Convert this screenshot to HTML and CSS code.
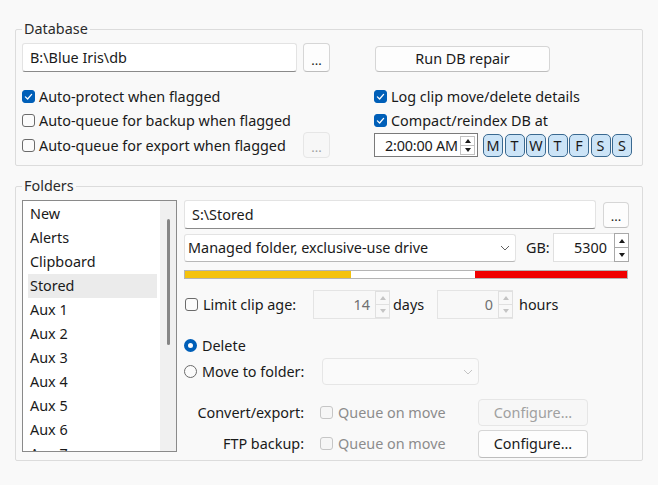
FILE: index.html
```html
<!DOCTYPE html>
<html>
<head>
<meta charset="utf-8">
<title>Clip storage</title>
<link rel="stylesheet" href="styles.css">
</head>
<body>
<div class="page">
  <fieldset class="group db">
    <legend>Database</legend>
    <div class="db-cols">
      <div class="db-left">
        <div class="path-row">
          <div class="field path">B:\Blue Iris\db</div>
          <button class="btn dots">...</button>
        </div>
        <div class="chk-row first"><span class="chk on"><svg viewBox="0 0 13 13" width="13" height="13"><path d="M3.4 6.9l2.2 2.1 4-4.6" fill="none" stroke="#fff" stroke-width="1.3" stroke-linecap="round" stroke-linejoin="round"/></svg></span><span>Auto-protect when flagged</span></div>
        <div class="chk-row"><span class="chk"></span><span>Auto-queue for backup when flagged</span></div>
        <div class="chk-row tall"><span class="chk"></span><span class="grow">Auto-queue for export when flagged</span><button class="btn dots off">...</button></div>
      </div>
      <div class="db-right">
        <button class="btn repair">Run DB repair</button>
        <div class="chk-row first"><span class="chk on"><svg viewBox="0 0 13 13" width="13" height="13"><path d="M3.4 6.9l2.2 2.1 4-4.6" fill="none" stroke="#fff" stroke-width="1.3" stroke-linecap="round" stroke-linejoin="round"/></svg></span><span>Log clip move/delete details</span></div>
        <div class="chk-row"><span class="chk on"><svg viewBox="0 0 13 13" width="13" height="13"><path d="M3.4 6.9l2.2 2.1 4-4.6" fill="none" stroke="#fff" stroke-width="1.3" stroke-linecap="round" stroke-linejoin="round"/></svg></span><span>Compact/reindex DB at</span></div>
        <div class="time-row">
          <div class="timefield">
            <span class="tval">2:00:00 AM</span>
            <span class="spin small"><span class="sb"><i class="tri up"></i></span><span class="sb"><i class="tri down"></i></span></span>
          </div>
          <div class="days">
            <span class="day">M</span><span class="day">T</span><span class="day">W</span><span class="day">T</span><span class="day">F</span><span class="day">S</span><span class="day">S</span>
          </div>
        </div>
      </div>
    </div>
  </fieldset>

  <fieldset class="group folders">
    <legend>Folders</legend>
    <div class="f-cols">
      <div class="listbox">
        <div class="items">
          <div class="item">New</div>
          <div class="item">Alerts</div>
          <div class="item">Clipboard</div>
          <div class="item sel">Stored</div>
          <div class="item">Aux 1</div>
          <div class="item">Aux 2</div>
          <div class="item">Aux 3</div>
          <div class="item">Aux 4</div>
          <div class="item">Aux 5</div>
          <div class="item">Aux 6</div>
          <div class="item">Aux 7</div>
        </div>
        <div class="vscroll"><div class="thumb"></div></div>
      </div>
      <div class="f-right">
        <div class="row r-path">
          <div class="field fpath">S:\Stored</div>
          <button class="btn dots">...</button>
        </div>
        <div class="row r-combo">
          <div class="combo">
            <span>Managed folder, exclusive-use drive</span>
            <svg class="chev" width="10" height="6" viewBox="0 0 10 6"><path d="M1 1l4 4 4-4" fill="none" stroke="#606060" stroke-width="1"/></svg>
          </div>
          <span class="gb">GB:</span>
          <div class="spinfield gbfield">
            <span class="sval">5300</span>
            <span class="spin full"><span class="sb"><i class="tri up"></i></span><span class="sb"><i class="tri down"></i></span></span>
          </div>
        </div>
        <div class="bar">
          <span class="seg yellow" style="width:166px"></span>
          <span class="seg white" style="width:124px"></span>
          <span class="seg red" style="width:152px"></span>
        </div>
        <div class="row r-limit">
          <div class="limit-lbl"><span class="chk"></span><span>Limit clip age:</span></div>
          <div class="spinfield dis daysf">
            <span class="sval">14</span>
            <span class="spin dis-spin"><span class="sb"><i class="tri up"></i></span><span class="sb"><i class="tri down"></i></span></span>
          </div>
          <span class="unit days-u">days</span>
          <div class="spinfield dis hoursf">
            <span class="sval">0</span>
            <span class="spin dis-spin"><span class="sb"><i class="tri up"></i></span><span class="sb"><i class="tri down"></i></span></span>
          </div>
          <span class="unit">hours</span>
        </div>
        <div class="row r-delete">
          <span class="radio on"></span><span>Delete</span>
        </div>
        <div class="row r-move">
          <div class="move-lbl"><span class="radio"></span><span>Move to folder:</span></div>
          <div class="combo dis-combo">
            <span></span>
            <svg class="chev" width="10" height="6" viewBox="0 0 10 6"><path d="M1 1l4 4 4-4" fill="none" stroke="#c4c4c4" stroke-width="1"/></svg>
          </div>
        </div>
        <div class="row r-opt first-opt">
          <span class="olabel">Convert/export:</span>
          <div class="qmove"><span class="chk dis"></span><span>Queue on move</span></div>
          <button class="btn cfg off">Configure...</button>
        </div>
        <div class="row r-opt second-opt">
          <span class="olabel">FTP backup:</span>
          <div class="qmove"><span class="chk dis"></span><span>Queue on move</span></div>
          <button class="btn cfg">Configure...</button>
        </div>
      </div>
    </div>
  </fieldset>
</div>
</body>
</html>
```

FILE: styles.css
```css
* { box-sizing: border-box; }
html, body { margin: 0; padding: 0; }
body {
  background: #f9f9f9;
  font-family: "Noto Sans", "Open Sans", sans-serif;
  font-size: 14.4px;
  color: #1a1a1a;
  width: 658px;
  height: 485px;
  overflow: hidden;
}
.page { padding: 20px 15px 0 15px; }

.group {
  margin: 0;
  border: 1px solid #dcdcdc;
  border-radius: 2px;
  min-width: 0;
}
.group legend {
  padding: 0 2px;
  margin-left: 0;
  line-height: 18px;
  height: 18px;
  color: #2b2b2b;
}
.db { padding: 5px 10px 7px 6px; }
.folders { margin-top: 11px; padding: 5px 13px 3px 6px; }

/* generic controls */
.btn {
  font-family: inherit;
  font-size: 14.4px;
  color: #1a1a1a;
  background: #fdfdfd;
  border: 1px solid #d6d6d6;
  border-bottom-color: #bdbdbd;
  border-radius: 4px;
  padding: 0;
  margin: 0;
}
.btn.off {
  background: #f7f7f7;
  border-color: #e6e6e6;
  color: #a0a0a0;
}
.dots {
  width: 27px;
  height: 29px;
  font-size: 13px;
  line-height: 1;
  padding-top: 6px;
}
.field {
  background: #fff;
  border: 1px solid #e3e3e3;
  border-bottom-color: #8a8a8a;
  border-radius: 3px;
  height: 29px;
  line-height: 27px;
  padding-left: 7px;
  white-space: nowrap;
}

.chk {
  display: inline-block;
  flex: 0 0 13px;
  width: 13px;
  height: 13px;
  border: 1px solid #6b6b6b;
  border-radius: 3px;
  background: #fbfbfb;
  margin-right: 4px;
  position: relative;
}
.chk svg { display: block; margin: -1px; }
.chk.on { background: #005fb8; border-color: #005fb8; }
.chk.dis { border-color: #c6c6c6; background: #f6f6f6; }

.radio {
  display: inline-block;
  flex: 0 0 13px;
  width: 13px;
  height: 13px;
  border-radius: 50%;
  border: 1px solid #6b6b6b;
  background: #fbfbfb;
  margin-right: 5px;
}
.radio.on {
  background: #fff;
  border: 4px solid #005fb8;
}

/* Database */
.db-cols { display: flex; }
.db-left { width: 308px; flex: 0 0 308px; margin-right: 44px; display: flex; flex-direction: column; }
.db-right { flex: 1; display: flex; flex-direction: column; }
.path-row { display: flex; align-items: center; gap: 6px; height: 29px; }
.path { flex: 1; }
.chk-row { display: flex; align-items: center; height: 24px; white-space: nowrap; }
.chk-row.first { margin-top: 12px; }
.chk-row.tall { height: 26px; }
.chk-row .grow { flex: 1; }
.chk-row .dots { height: 26px; width: 27px; padding-top: 4px; }

.repair {
  width: 175px;
  height: 26px;
  margin: 3px 0 0 1px;
  line-height: 24px;
}
.time-row { display: flex; align-items: center; margin-top: 1px; height: 24px; }
.timefield {
  width: 104px;
  height: 24px;
  background: #fff;
  border: 1px solid #7a7a7a;
  display: flex;
  align-items: center;
  padding-left: 10px;
  padding-right: 2px;
}
.tval { flex: 1; white-space: nowrap; letter-spacing: -0.2px; }
.days { display: flex; gap: 1.5px; margin-left: 5px; }
.day {
  width: 20px;
  height: 23px;
  background: #cce4f7;
  border: 1px solid #3a6990;
  border-radius: 5px;
  text-align: center;
  line-height: 21px;
  font-size: 14.4px;
}

/* spinners */
.spin {
  display: flex;
  flex-direction: column;
  width: 15px;
  border: 1px solid #c2c2c2;
  background: #fff;
}
.spin .sb { flex: 1; display: flex; align-items: center; justify-content: center; }
.spin .sb + .sb { border-top: 1px solid #c2c2c2; }
.spin.small { height: 19px; }
.spin.full { height: 29px; margin: -1px -1px -1px 0; border-color: #a8a8a8; }
.spin.full .sb + .sb { border-top-color: #a8a8a8; }
.tri { display: block; width: 0; height: 0; border-left: 3px solid transparent; border-right: 3px solid transparent; }
.tri.up { border-bottom: 4px solid #1a1a1a; }
.tri.down { border-top: 4px solid #1a1a1a; }
.dis-spin { height: 27px; margin: -1px -1px -1px 0; border-color: #e0e0e0; background: #f8f8f8; }
.dis-spin .sb + .sb { border-top-color: #e0e0e0; }
.dis-spin .tri.up { border-bottom-color: #c4c4c4; }
.dis-spin .tri.down { border-top-color: #c4c4c4; }

/* Folders */
.f-cols { display: flex; align-items: flex-start; }
.listbox {
  flex: 0 0 155px;
  width: 155px;
  height: 252px;
  background: #fff;
  border: 1px solid #8a8a8a;
  display: flex;
  margin-right: 7px;
}
.items { flex: 1; overflow: hidden; padding: 1px 3px 0 5px; }
.item { height: 24px; line-height: 24px; padding-left: 2px; white-space: nowrap; }
.item.sel { background: #ebebeb; }
.vscroll { width: 16px; flex: 0 0 16px; background: #f0f0f0; }
.thumb { width: 3px; height: 126px; margin: 18px auto 0 7px; background: #868686; border-radius: 2px; }

.f-right { flex: 1; display: flex; flex-direction: column; }
.row { display: flex; align-items: center; white-space: nowrap; }
.r-path { height: 29px; gap: 7px; }
.fpath { flex: 1; }
.r-path .dots { height: 26px; width: 26px; padding-top: 4px; }
.r-combo { height: 29px; margin-top: 4px; }
.combo {
  width: 332px;
  height: 28px;
  background: #fff;
  border: 1px solid #e3e3e3;
  border-bottom-color: #b8b8b8;
  border-radius: 3px;
  display: flex;
  align-items: center;
  justify-content: space-between;
  padding: 0 5px 0 3px;
}
.gb { margin-left: 10px; width: 27px; }
.spinfield {
  height: 29px;
  background: #fff;
  border: 1px solid #e0e0e0;
  display: flex;
  align-items: center;
}
.sval { flex: 1; text-align: right; padding-right: 7px; }
.gbfield { width: 76px; }

.bar {
  display: flex;
  height: 9px;
  margin-top: 8px;
  width: 444px;
  border: 1px solid #b4b4b4;
}
.seg { display: block; height: 100%; }
.seg.yellow { background: #f4c20d; }
.seg.white { background: #fff; }
.seg.red { background: #f00000; }

.r-limit { height: 29px; margin-top: 11px; }
.limit-lbl { width: 129px; display: flex; align-items: center; padding-left: 1px; }
.limit-lbl .chk { margin-right: 5px; }
.spinfield.dis { background: #f8f8f8; border-color: #e4e4e4; color: #707070; height: 29px; }
.daysf { width: 77px; }
.hoursf { width: 76px; }
.dis .sval { padding-right: 5px; }
.unit { padding-left: 3px; }
.days-u { width: 47px; }
.r-limit .unit:last-child { padding-left: 6px; }

.r-delete { height: 24px; margin-top: 14px; }
.r-move { height: 27px; margin-top: 1px; }
.move-lbl { width: 138px; display: flex; align-items: center; }
.dis-combo { width: 157px; height: 27px; background: #fafafa; border-color: #e6e6e6; border-radius: 4px; }

.r-opt { height: 27px; }
.first-opt { margin-top: 14px; }
.second-opt { margin-top: 4px; }
.olabel { width: 120px; text-align: right; }
.qmove { display: flex; align-items: center; margin-left: 16px; width: 158px; color: #8c8c8c; }
.qmove .chk { margin-right: 5px; }
.cfg { width: 110px; height: 27px; line-height: 25px; }
.second-opt .cfg { height: 28px; }
```
